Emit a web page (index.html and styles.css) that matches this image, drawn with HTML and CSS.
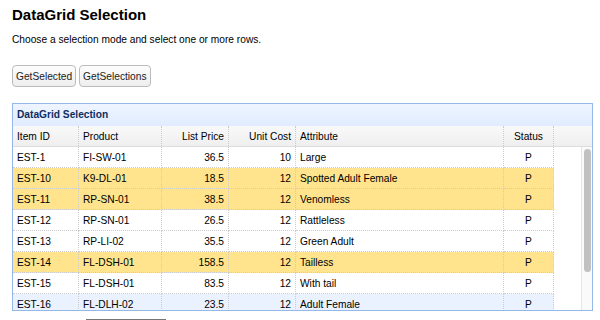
FILE: index.html
```html
<!DOCTYPE html>
<html lang="en">
<head>
  <meta charset="UTF-8">
  <title>DataGrid Selection</title>
  <link rel="stylesheet" href="styles.css">
</head>
<body>
  <h2>DataGrid Selection</h2>
  <p class="intro">Choose a selection mode and select one or more rows.</p>

  <div class="toolbar">
    <button class="btn">GetSelected</button>
    <button class="btn">GetSelections</button>
  </div>

  <div class="panel">
    <div class="panel-header">DataGrid Selection</div>

    <div class="grid-header">
      <table class="grid">
        <colgroup>
          <col class="c-id"><col class="c-product"><col class="c-price"><col class="c-cost"><col class="c-attr"><col class="c-status">
        </colgroup>
        <tr>
          <td>Item ID</td>
          <td>Product</td>
          <td class="num">List Price</td>
          <td class="num">Unit Cost</td>
          <td>Attribute</td>
          <td class="center">Status</td>
        </tr>
      </table>
    </div>

    <div class="grid-body">
      <div class="grid-view">
        <table class="grid">
          <colgroup>
            <col class="c-id"><col class="c-product"><col class="c-price"><col class="c-cost"><col class="c-attr"><col class="c-status">
          </colgroup>
          <tr><td>EST-1</td><td>FI-SW-01</td><td class="num">36.5</td><td class="num">10</td><td>Large</td><td class="center">P</td></tr>
          <tr class="selected"><td>EST-10</td><td>K9-DL-01</td><td class="num">18.5</td><td class="num">12</td><td>Spotted Adult Female</td><td class="center">P</td></tr>
          <tr class="selected"><td>EST-11</td><td>RP-SN-01</td><td class="num">38.5</td><td class="num">12</td><td>Venomless</td><td class="center">P</td></tr>
          <tr><td>EST-12</td><td>RP-SN-01</td><td class="num">26.5</td><td class="num">12</td><td>Rattleless</td><td class="center">P</td></tr>
          <tr><td>EST-13</td><td>RP-LI-02</td><td class="num">35.5</td><td class="num">12</td><td>Green Adult</td><td class="center">P</td></tr>
          <tr class="selected"><td>EST-14</td><td>FL-DSH-01</td><td class="num">158.5</td><td class="num">12</td><td>Tailless</td><td class="center">P</td></tr>
          <tr><td>EST-15</td><td>FL-DSH-01</td><td class="num">83.5</td><td class="num">12</td><td>With tail</td><td class="center">P</td></tr>
          <tr class="hover"><td>EST-16</td><td>FL-DLH-02</td><td class="num">23.5</td><td class="num">12</td><td>Adult Female</td><td class="center">P</td></tr>
        </table>
      </div>
      <!-- scrollbar drawn by hand, the headless browser hides native ones -->
      <div class="scroll-track">
        <div class="scroll-thumb"></div>
      </div>
    </div>
  </div>

  <div class="mode">
    <span>Selection Mode:</span>
    <select class="mode-select">
      <option>Multiple Rows</option>
      <option>Single Row</option>
    </select>
  </div>
</body>
</html>
```

FILE: styles.css
```css
body {
  margin: 0;
  padding: 0 12px;
  font-family: "Liberation Sans", Arial, sans-serif;
  font-size: 10.2px;
  color: #000;
  background-color: #fff;
}

h2 {
  margin: 0;
  padding-top: 5px;
  font-size: 15px;
  line-height: 20px;
  font-weight: bold;
}

.intro {
  margin: 8px 0 0;
  line-height: 14px;
}

.toolbar {
  margin-top: 18px;
  display: flex;
  gap: 3px;
}

.btn {
  height: 22px;
  padding: 0 3px;
  font-family: "Liberation Sans", Arial, sans-serif;
  font-size: 10.2px;
  color: #222;
  background: linear-gradient(#fdfdfd, #eeeeee);
  border: 1px solid #bbbbbb;
  border-radius: 4px;
}

.panel {
  margin-top: 16px;
  width: 581px;
  box-sizing: border-box;
  border: 1px solid #95b8e7;
  overflow: hidden;
}

.panel-header {
  height: 22px;
  line-height: 22px;
  padding-left: 4px;
  font-weight: bold;
  color: #0e2d5f;
  background: linear-gradient(#eff5ff, #e0ecff);
}

.grid {
  table-layout: fixed;
  border-collapse: separate;
  border-spacing: 0;
  width: 541px;
}

.c-id { width: 66px; }
.c-product { width: 83px; }
.c-price { width: 67px; }
.c-cost { width: 67px; }
.c-attr { width: 208px; }
.c-status { width: 50px; }

.grid td {
  padding: 0 4px;
  border-right: 1px dotted #ccc;
  border-bottom: 1px dotted #ccc;
  white-space: nowrap;
  overflow: hidden;
}

.grid-header {
  background: linear-gradient(#f9f9f9, #efefef);
  border-bottom: 1px solid #dddddd;
}

.grid-header .grid td {
  height: 20px;
  border-bottom: none;
}

.grid-body {
  height: 163px;
  display: flex;
}

.grid-view {
  flex: 1;
  overflow: hidden;
}

.grid-body .grid td {
  height: 20px;
}

.num { text-align: right; }
.center { text-align: center; }

.selected { background-color: #ffe48d; }
.hover { background-color: #eaf2ff; }

.scroll-track {
  width: 11px;
  box-sizing: border-box;
  padding: 2px 1px 0 2px;
  background-color: #fafafa;
  border-left: 1px solid #e6e6e6;
}

.scroll-thumb {
  height: 123px;
  background-color: #c1c1c1;
  border-radius: 4px;
}

.mode {
  margin-top: 8px;
  display: flex;
  align-items: center;
  gap: 0;
}

.mode-select {
  width: 82px;
  height: 20px;
  margin-left: 0;
  font-size: 10.2px;
}
```
